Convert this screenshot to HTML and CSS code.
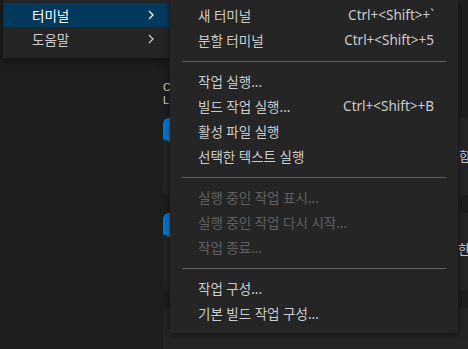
FILE: index.html
```html
<!DOCTYPE html>
<html lang="ko">
<head>
    <meta charset="UTF-8">
    <title>터미널 메뉴</title>
    <link rel="stylesheet" href="styles.css">
</head>
<body>
    <div class="workbench">
        <div class="welcome">
            <div class="welcome-head">
                <p>C</p>
                <p>L</p>
            </div>
            <div class="card">
                <span class="badge"></span>
                <p class="card-text first">통합</p>
            </div>
            <div class="card">
                <span class="badge"></span>
                <p class="card-text second">한</p>
            </div>
            <div class="card"></div>
        </div>

        <div class="menu menubar-menu">
            <div class="menu-item active">
                <span class="label">터미널</span>
                <svg class="chevron" width="8" height="10" viewBox="0 0 8 10"><path d="M2 1l4 4-4 4" /></svg>
            </div>
            <div class="menu-item">
                <span class="label">도움말</span>
                <svg class="chevron" width="8" height="10" viewBox="0 0 8 10"><path d="M2 1l4 4-4 4" /></svg>
            </div>
        </div>

        <div class="menu submenu">
            <div class="menu-item"><span class="label">새 터미널</span><span class="keys">Ctrl+&lt;Shift&gt;+`</span></div>
            <div class="menu-item"><span class="label">분할 터미널</span><span class="keys">Ctrl+&lt;Shift&gt;+5</span></div>
            <div class="separator"></div>
            <div class="menu-item"><span class="label">작업 실행...</span></div>
            <div class="menu-item"><span class="label">빌드 작업 실행...</span><span class="keys">Ctrl+&lt;Shift&gt;+B</span></div>
            <div class="menu-item"><span class="label">활성 파일 실행</span></div>
            <div class="menu-item"><span class="label">선택한 텍스트 실행</span></div>
            <div class="separator"></div>
            <div class="menu-item disabled"><span class="label">실행 중인 작업 표시...</span></div>
            <div class="menu-item disabled"><span class="label">실행 중인 작업 다시 시작...</span></div>
            <div class="menu-item disabled"><span class="label">작업 종료...</span></div>
            <div class="separator"></div>
            <div class="menu-item"><span class="label">작업 구성...</span></div>
            <div class="menu-item"><span class="label">기본 빌드 작업 구성...</span></div>
        </div>
    </div>
</body>
</html>
```

FILE: styles.css
```css
* {
    margin: 0;
    padding: 0;
    box-sizing: border-box;
}
body {
    background-color: #1e1e1e;
    font-family: 'Noto Sans', 'Noto Sans CJK KR', sans-serif;
    font-size: 13.5px;
    color: #cccccc;
    overflow: hidden;
}
.workbench {
    position: relative;
    width: 468px;
    height: 349px;
    overflow: hidden;
}

/* welcome page behind the menus */
.welcome {
    padding: 81px 0 0 163px;
    display: flex;
    flex-direction: column;
    gap: 12px;
}
.welcome-head {
    height: 25px;
    font-family: 'Liberation Sans', sans-serif;
    font-size: 11px;
    line-height: 12.8px;
    color: #cccccc;
}
.card {
    position: relative;
    width: 320px;
    height: 77px;
    margin-bottom: 6px;
    background-color: #252526;
    border-radius: 6px;
}
.badge {
    position: absolute;
    left: 0;
    top: 0;
    width: 14px;
    height: 27px;
    background-color: #0078d4;
    border-top-left-radius: 6px;
    clip-path: polygon(0 0, 100% 0, 100% 100%, 0 78%);
}
.card-text {
    position: absolute;
    left: 284px;
    font-family: 'Noto Sans CJK KR', sans-serif;
    font-size: 13px;
    color: #cccccc;
}
.card-text.first {
    top: 28px;
}
.card-text.second {
    top: 26px;
    left: 295px;
}

/* menus */
.menu {
    position: absolute;
    top: 0;
    background-color: #252526;
    box-shadow: 0 2px 8px rgba(0, 0, 0, 0.5);
}
.menubar-menu {
    left: 3px;
    width: 167px;
    padding: 3px 1px 7px;
}
.submenu {
    left: 170px;
    width: 288px;
    height: 333px;
    padding-top: 2px;
}
.menu-item {
    display: flex;
    align-items: center;
    height: 25px;
    padding: 0 24px 0 28px;
    white-space: nowrap;
}
.menubar-menu .menu-item {
    height: 24px;
    padding: 0 14px 0 28px;
}
.menu-item .label {
    flex: 1;
}
.menu-item .keys {
    font-size: 13.5px;
}
.menu-item.active {
    background-color: #04395e;
    color: #ffffff;
}
.menu-item.disabled {
    color: #cccccc;
    opacity: 0.35;
}
.chevron path {
    fill: none;
    stroke: currentColor;
    stroke-width: 1.3;
}
.separator {
    height: 1px;
    margin: 9px 12px 6px;
    background-color: #5f5f5f;
}
```
